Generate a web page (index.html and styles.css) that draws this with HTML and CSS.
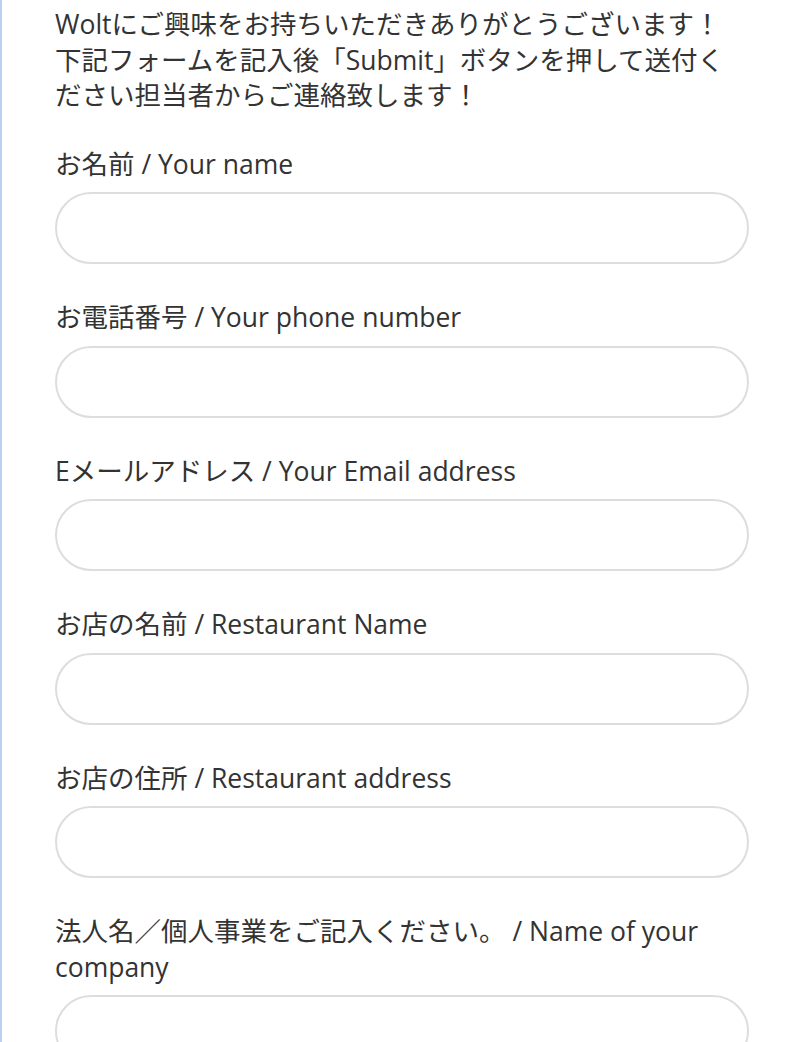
FILE: index.html
```html
<!DOCTYPE html>
<html lang="ja">
  <head>
    <meta charset="UTF-8" />
    <meta name="viewport" content="width=device-width, initial-scale=1.0" />
    <title>Wolt - お問い合わせ</title>
    <link rel="stylesheet" href="styles.css">
  </head>
  <body>
    <div class="form-page">
      <p class="form-intro">
        Woltにご興味をお持ちいただきありがとうございます！<br />
        下記フォームを記入後「Submit」ボタンを押して送付く<br />
        ださい担当者からご連絡致します！
      </p>

      <form class="contact-form">
        <div class="form-field">
          <label class="field-label" for="name">お名前 / Your name</label>
          <input class="field-input" type="text" id="name" />
        </div>

        <div class="form-field">
          <label class="field-label" for="phone">お電話番号 / Your phone number</label>
          <input class="field-input" type="tel" id="phone" />
        </div>

        <div class="form-field">
          <label class="field-label" for="email">Eメールアドレス / Your Email address</label>
          <input class="field-input" type="email" id="email" />
        </div>

        <div class="form-field">
          <label class="field-label" for="restaurant">お店の名前 / Restaurant Name</label>
          <input class="field-input" type="text" id="restaurant" />
        </div>

        <div class="form-field">
          <label class="field-label" for="address">お店の住所 / Restaurant address</label>
          <input class="field-input" type="text" id="address" />
        </div>

        <div class="form-field">
          <label class="field-label" for="company">法人名／個人事業をご記入ください。 / Name of your company</label>
          <input class="field-input" type="text" id="company" />
        </div>
      </form>
    </div>
  </body>
</html>
```

FILE: styles.css
```css
* {
  margin: 0;
  padding: 0;
  box-sizing: border-box;
}

body {
  font-family: "Open Sans", "Noto Sans CJK JP", sans-serif;
  font-size: 26.5px;
  color: #333;
  background: #fff;
  overflow: hidden;
  height: 100vh;
}

.form-page {
  height: 100%;
  border-left: 2px solid #b9cff3;
  padding: 7px 51px 0 53px;
}

.form-intro {
  line-height: 35.5px;
  margin-bottom: 33px;
  white-space: nowrap;
}

.contact-form {
  display: flex;
  flex-direction: column;
  gap: 36px;
}

.form-field {
  display: flex;
  flex-direction: column;
}

.field-label {
  line-height: 35.5px;
  margin-bottom: 10px;
}

.field-input {
  height: 72px;
  width: 100%;
  border: 2px solid #ddd;
  border-radius: 36px;
  background: #fff;
  font: inherit;
  padding: 0 24px;
  outline: none;
}
```
